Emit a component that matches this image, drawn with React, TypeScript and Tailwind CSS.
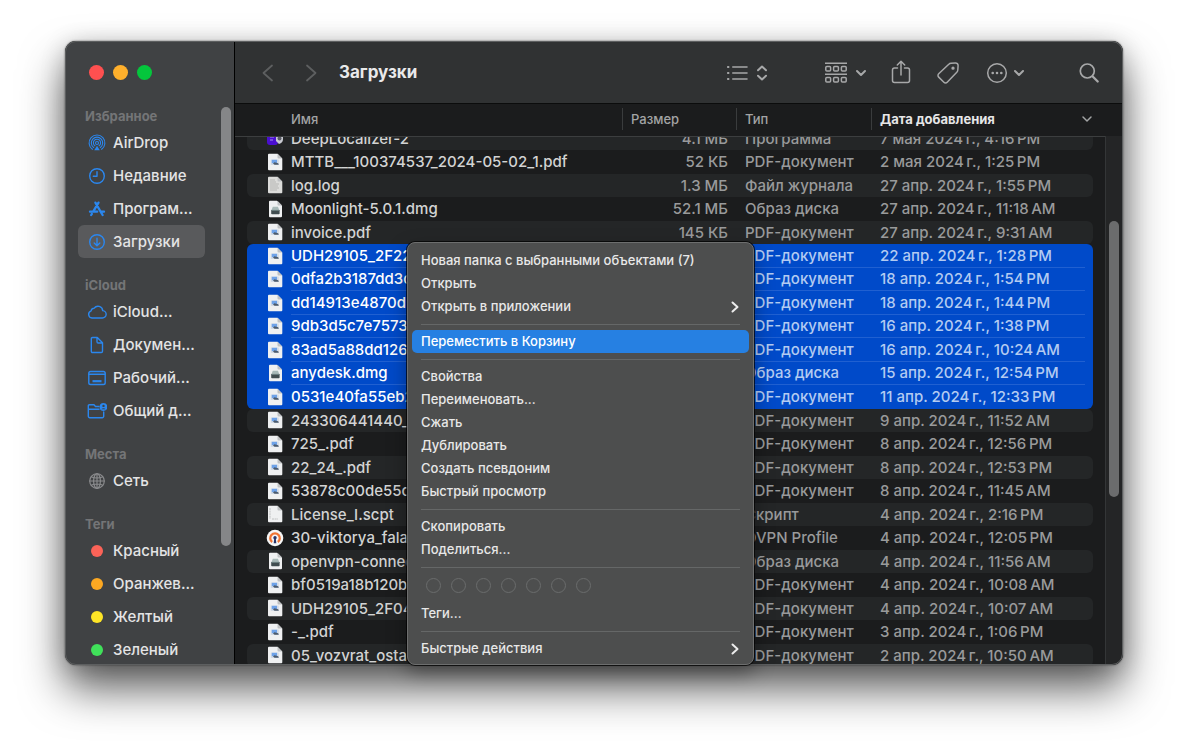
import type { ReactNode } from 'react';

type FileKind = 'app' | 'pdf' | 'log' | 'dmg' | 'script' | 'vpn';

interface FileRow {
  kind: FileKind;
  name: string;
  size?: string;
  type: string;
  date: string;
  selected?: boolean;
}

const files: FileRow[] = [
  { kind: 'app', name: 'DeepLocalizer-2', size: '4.1 МБ', type: 'Программа', date: '7 мая 2024\u202Fг., 4:16\u202FPM' },
  { kind: 'pdf', name: 'MTTB___100374537_2024-05-02_1.pdf', size: '52 КБ', type: 'PDF-документ', date: '2 мая 2024\u202Fг., 1:25\u202FPM' },
  { kind: 'log', name: 'log.log', size: '1.3 МБ', type: 'Файл журнала', date: '27 апр. 2024\u202Fг., 1:55\u202FPM' },
  { kind: 'dmg', name: 'Moonlight-5.0.1.dmg', size: '52.1 МБ', type: 'Образ диска', date: '27 апр. 2024\u202Fг., 11:18\u202FAM' },
  { kind: 'pdf', name: 'invoice.pdf', size: '145 КБ', type: 'PDF-документ', date: '27 апр. 2024\u202Fг., 9:31\u202FAM' },
  { kind: 'pdf', name: 'UDH29105_2F22', type: 'PDF-документ', date: '22 апр. 2024\u202Fг., 1:28\u202FPM', selected: true },
  { kind: 'pdf', name: '0dfa2b3187dd3c', type: 'PDF-документ', date: '18 апр. 2024\u202Fг., 1:54\u202FPM', selected: true },
  { kind: 'pdf', name: 'dd14913e4870d', type: 'PDF-документ', date: '18 апр. 2024\u202Fг., 1:44\u202FPM', selected: true },
  { kind: 'pdf', name: '9db3d5c7e7573', type: 'PDF-документ', date: '16 апр. 2024\u202Fг., 1:38\u202FPM', selected: true },
  { kind: 'pdf', name: '83ad5a88dd126', type: 'PDF-документ', date: '16 апр. 2024\u202Fг., 10:24\u202FAM', selected: true },
  { kind: 'dmg', name: 'anydesk.dmg', type: 'Образ диска', date: '15 апр. 2024\u202Fг., 12:54\u202FPM', selected: true },
  { kind: 'pdf', name: '0531e40fa55eb2', type: 'PDF-документ', date: '11 апр. 2024\u202Fг., 12:33\u202FPM', selected: true },
  { kind: 'pdf', name: '243306441440_', type: 'PDF-документ', date: '9 апр. 2024\u202Fг., 11:52\u202FAM' },
  { kind: 'pdf', name: '725_.pdf', type: 'PDF-документ', date: '8 апр. 2024\u202Fг., 12:56\u202FPM' },
  { kind: 'pdf', name: '22_24_.pdf', type: 'PDF-документ', date: '8 апр. 2024\u202Fг., 12:53\u202FPM' },
  { kind: 'pdf', name: '53878c00de55c', type: 'PDF-документ', date: '8 апр. 2024\u202Fг., 11:45\u202FAM' },
  { kind: 'script', name: 'License_I.scpt', type: 'Скрипт', date: '4 апр. 2024\u202Fг., 2:16\u202FPM' },
  { kind: 'vpn', name: '30-viktorya_fala', type: 'OVPN Profile', date: '4 апр. 2024\u202Fг., 12:05\u202FPM' },
  { kind: 'dmg', name: 'openvpn-connec', type: 'Образ диска', date: '4 апр. 2024\u202Fг., 11:56\u202FAM' },
  { kind: 'pdf', name: 'bf0519a18b120b', type: 'PDF-документ', date: '4 апр. 2024\u202Fг., 10:08\u202FAM' },
  { kind: 'pdf', name: 'UDH29105_2F04', type: 'PDF-документ', date: '4 апр. 2024\u202Fг., 10:07\u202FAM' },
  { kind: 'pdf', name: '-_.pdf', type: 'PDF-документ', date: '3 апр. 2024\u202Fг., 1:06\u202FPM' },
  { kind: 'pdf', name: '05_vozvrat_osta', type: 'PDF-документ', date: '2 апр. 2024\u202Fг., 10:50\u202FAM' },
];

function FileIcon({ kind }: { kind: FileKind }) {
  if (kind === 'app') {
    return (
      <svg viewBox="0 0 16 18" className="h-[18px] w-4 shrink-0" aria-hidden="true">
        <rect x="0" y="2" width="11" height="14" rx="3" fill="#4a0fd0" />
        <path d="M9 2h4.5A2.5 2.5 0 0 1 16 4.500V10a5 5 0 0 1-4 5L9 12z" fill="#c9cbd2" />
        <circle cx="12.500" cy="9.500" r="2" fill="#5b5d66" />
        <path d="M3 8h4M3 11h3" stroke="#a58bf0" strokeWidth="1.200" />
      </svg>
    );
  }
  if (kind === 'vpn') {
    return (
      <svg viewBox="0 0 16 18" className="h-[18px] w-4 shrink-0 overflow-visible" aria-hidden="true">
        <circle cx="8" cy="9" r="8.300" fill="#f5f5f5" />
        <path d="M5.200 13A4.800 4.800 0 1 1 10.800 13" fill="none" stroke="#ef7434" strokeWidth="2.300" />
        <circle cx="8" cy="8.800" r="1.700" fill="#27356b" />
        <path d="M7.200 9.500h1.600l.5 4.800H6.700z" fill="#27356b" />
      </svg>
    );
  }
  return (
    <svg viewBox="0 0 16 18" className="h-[18px] w-4 shrink-0" aria-hidden="true">
      <path
        d={kind === 'dmg' ? 'M3 .8h7l5 5v10.400a1 1 0 0 1-1 1H3a1 1 0 0 1-1-1V1.800a1 1 0 0 1 1-1z' : 'M2 .8h8.500L15.300 5.600V16.200a1 1 0 0 1-1 1H2a1 1 0 0 1-1-1V1.800a1 1 0 0 1 1-1z'}
        fill={kind === 'log' ? '#dcdcda' : '#eff0f1'}
      />
      <path d="M10.500 .8L15.200 5.600h-3.700a1 1 0 0 1-1-1z" fill="#bfc1c3" />
      {kind === 'pdf' && (
        <>
          <rect x="3.800" y="6.400" width="8" height="5.600" rx=".6" fill="#d3dbe6" />
          <rect x="4.800" y="6.800" width="5.200" height="3.400" fill="#6ea2e8" />
          <path d="M6 10.600l1.500-1.300 3.700.9.600 1.600H7.500z" fill="#4b5a6c" />
        </>
      )}
      {kind === 'dmg' && (
        <>
          <path d="M5.800 6.800h5.200l1.400 3.700H4.400z" fill="#a9bab9" />
          <path d="M4.200 10h8.400v3.400a.8.800 0 0 1-.8.800H5a.8.800 0 0 1-.8-.8z" fill="#414d50" />
          <path d="M4.400 10.400h8" stroke="#75898a" strokeWidth=".9" />
        </>
      )}
      {kind === 'log' && <path d="M3 4h5M3 6h6M3 8h9M3 10h8M3 12h9M3 14h7" stroke="#a6a7a5" strokeWidth=".7" />}
      {kind === 'script' && <path d="M3 3v11M5 14h6" stroke="#b4b5b6" strokeWidth=".8" strokeDasharray="2 .6" />}
    </svg>
  );
}

function SideIcon({ children, muted }: { children: ReactNode; muted?: boolean }) {
  return (
    <svg
      viewBox="0 0 20 18"
      className={`h-[18px] w-5 shrink-0 ${muted ? 'text-[#8b8c8e]' : 'text-[#2b87ee]'}`}
      fill="none"
      stroke="currentColor"
      strokeWidth="1.400"
      strokeLinecap="round"
      strokeLinejoin="round"
      aria-hidden="true"
    >
      {children}
    </svg>
  );
}

const airdropIcon = (
  <SideIcon>
    <g strokeWidth="1.100">
      <path d="M5.400 15.300a7.900 7.900 0 1 1 9.200 0" />
      <path d="M6.700 13.500a5.700 5.700 0 1 1 6.600 0" />
      <path d="M7.900 11.800a3.600 3.600 0 1 1 4.200 0" />
      <circle cx="10" cy="9" r="1.500" />
      <path d="M10 11.800l-2.800 4.500h5.600z" fill="currentColor" stroke="none" />
    </g>
  </SideIcon>
);
const clockIcon = (
  <SideIcon>
    <circle cx="10" cy="9" r="7.300" />
    <path d="M10 4.800V9.200H6.300" />
  </SideIcon>
);
const appsIcon = (
  <SideIcon>
    <path d="M8.400 2.600l5.700 9.900 1.500 2.500M11.500 2.600L6.300 11.400M4.900 13.900l-.7 1.100M3 11.700h7.200M14.400 11.700h2.600" strokeWidth="2.300" />
  </SideIcon>
);
const downloadIcon = (
  <SideIcon>
    <circle cx="10" cy="9" r="7.300" />
    <path d="M10 5.200v7.300M7.200 9.900l2.800 2.800 2.800-2.800" />
  </SideIcon>
);
const cloudIcon = (
  <SideIcon>
    <path d="M5 15a3.700 3.700 0 0 1-.8-7.200 2.800 2.800 0 0 1 3-2.600A4.700 4.700 0 0 1 15.700 7.600 3.700 3.700 0 0 1 15.200 15z" />
  </SideIcon>
);
const docIcon = (
  <SideIcon>
    <path d="M5.500 1.500h4.800l5.200 5.300v8.500a1.200 1.200 0 0 1-1.200 1.200H5.500a1.200 1.200 0 0 1-1.200-1.200V2.700a1.200 1.200 0 0 1 1.200-1.200zM10 1.800v4a1.200 1.200 0 0 0 1.200 1.200h4" />
  </SideIcon>
);
const desktopIcon = (
  <SideIcon>
    <rect x="1.800" y="2.500" width="16.400" height="13" rx="1.800" />
    <path d="M2 5.200h16" />
    <path d="M5.500 12.200h9" strokeWidth="2.200" strokeLinecap="butt" />
  </SideIcon>
);
const sharedIcon = (
  <SideIcon>
    <path d="M12 4.500H8.500L7 2.800H2.300a1 1 0 0 0-1 1v10.400A1.500 1.500 0 0 0 2.800 15.700h12.400a1.500 1.500 0 0 0 1.500-1.500V10M1.300 7.300H12" />
    <circle cx="16.500" cy="5" r="3.900" fill="currentColor" stroke="none" />
    <circle cx="16.500" cy="3.900" r="1.200" fill="#404244" stroke="none" />
    <path d="M14.500 7.300a2.200 1.700 0 0 1 4 0z" fill="#404244" stroke="none" />
  </SideIcon>
);
const globeIcon = (
  <SideIcon muted>
    <g strokeWidth="1.150">
      <circle cx="10" cy="9" r="7.300" />
      <ellipse cx="10" cy="9" rx="3.400" ry="7.300" />
      <path d="M10 1.700v14.600M2.700 9h14.600M4.200 4.700c3.200 1.700 8.400 1.700 11.600 0M4.200 13.300c3.200-1.700 8.400-1.700 11.600 0" />
    </g>
  </SideIcon>
);
const dot = (className: string) => (
  <span className="flex w-5 shrink-0 justify-center">
    <span className={`size-3 rounded-full ${className}`} />
  </span>
);

interface SideEntry {
  icon: ReactNode;
  label: string;
  active?: boolean;
}

const sections: { title: string; items: SideEntry[] }[] = [
  {
    title: 'Избранное',
    items: [
      { icon: airdropIcon, label: 'AirDrop' },
      { icon: clockIcon, label: 'Недавние' },
      { icon: appsIcon, label: 'Програм...' },
      { icon: downloadIcon, label: 'Загрузки', active: true },
    ],
  },
  {
    title: 'iCloud',
    items: [
      { icon: cloudIcon, label: 'iCloud...' },
      { icon: docIcon, label: 'Докумен...' },
      { icon: desktopIcon, label: 'Рабочий...' },
      { icon: sharedIcon, label: 'Общий д...' },
    ],
  },
  { title: 'Места', items: [{ icon: globeIcon, label: 'Сеть' }] },
  {
    title: 'Теги',
    items: [
      { icon: dot('bg-[#fb6358]'), label: 'Красный' },
      { icon: dot('bg-[#fda822]'), label: 'Оранжев...' },
      { icon: dot('bg-[#fee526]'), label: 'Желтый' },
      { icon: dot('bg-[#40e15a]'), label: 'Зеленый' },
    ],
  },
];

function Sidebar() {
  return (
    <aside className="relative flex w-[170px] shrink-0 flex-col overflow-hidden border-r border-black bg-[#404244]">
      <div className="flex h-12 shrink-0 gap-[9px] pt-6 pl-6">
        <button type="button" aria-label="Закрыть" className="size-[15px] rounded-full bg-[#ff5050]" />
        <button type="button" aria-label="Свернуть" className="size-[15px] rounded-full bg-[#ffb02c]" />
        <button type="button" aria-label="Развернуть" className="size-[15px] rounded-full bg-[#04c63c]" />
      </div>
      <nav>
        {sections.map((section) => (
          <section key={section.title}>
            <h2 className="h-[37px] pt-[18px] pl-5 text-[13px] leading-[18px] font-bold text-[#747577]">{section.title}</h2>
            <ul>
              {section.items.map((item) => (
                <li key={item.label} className="pr-[29px] pl-[13px]">
                  <a
                    href="#"
                    className={`flex h-[33px] items-center gap-[6px] rounded-md pl-[9px] text-[15px] font-medium whitespace-nowrap text-[#e4e4e5] ${item.active ? 'bg-[#595a5c]' : ''}`}
                  >
                    {item.icon}
                    <span className="pt-[2px]">{item.label}</span>
                  </a>
                </li>
              ))}
            </ul>
          </section>
        ))}
      </nav>
      <div className="absolute top-[66px] right-[3px] h-[439px] w-[10px] rounded-full bg-[#858688]" />
    </aside>
  );
}

function Toolbar() {
  const icon = 'shrink-0 fill-none stroke-current';
  return (
    <header className="flex h-[63px] shrink-0 items-center border-b border-[#0b0c0c] bg-[#303233] pt-[2px] pr-[23px] pl-[26px] text-[#a7a8a9]">
      <button type="button" aria-label="Назад" className="text-[#5d5f60]">
        <svg viewBox="0 0 14 20" className={`h-5 w-[14px] ${icon}`} strokeWidth="1.800" strokeLinecap="round" strokeLinejoin="round">
          <path d="M11 2.500L2.500 10 11 17.500" />
        </svg>
      </button>
      <button type="button" aria-label="Вперед" className="ml-[29px] text-[#5d5f60]">
        <svg viewBox="0 0 14 20" className={`h-5 w-[14px] ${icon}`} strokeWidth="1.800" strokeLinecap="round" strokeLinejoin="round">
          <path d="M3 2.500L11.500 10 3 17.500" />
        </svg>
      </button>
      <h1 className="ml-[21px] text-[17px] font-bold text-[#e9e9ea]">Загрузки</h1>
      <div className="ml-auto flex items-center">
        <button type="button" aria-label="Вид" className="flex items-center gap-2">
          <svg viewBox="0 0 22 18" className={`h-[18px] w-[22px] ${icon}`} strokeWidth="1.600" strokeLinecap="round">
            <path d="M6.800 3H21M6.800 9H21M6.800 15H21" />
            <path d="M2 3h.4M2 9h.4M2 15h.4" strokeWidth="2.200" />
          </svg>
          <svg viewBox="0 0 12 18" className={`h-[18px] w-3 ${icon}`} strokeWidth="2" strokeLinecap="round" strokeLinejoin="round">
            <path d="M2 6.200L6 2.500l4 3.700M2 11.800l4 3.700 4-3.700" />
          </svg>
        </button>
        <button type="button" aria-label="Группировка" className="ml-[56px] flex items-center gap-[7px]">
          <svg viewBox="0 0 24 22" className={`h-[22px] w-6 ${icon}`} strokeWidth="1.500">
            <path d="M1 1.200h22M1 12.200h22" />
            <rect x="1.800" y="4.500" width="4.800" height="4.500" rx="1" />
            <rect x="9.600" y="4.500" width="4.800" height="4.500" rx="1" />
            <rect x="17.400" y="4.500" width="4.800" height="4.500" rx="1" />
            <rect x="1.800" y="15.500" width="4.800" height="4.500" rx="1" />
            <rect x="9.600" y="15.500" width="4.800" height="4.500" rx="1" />
            <rect x="17.400" y="15.500" width="4.800" height="4.500" rx="1" />
          </svg>
          <svg viewBox="0 0 12 8" className={`h-2 w-3 ${icon}`} strokeWidth="2" strokeLinecap="round" strokeLinejoin="round">
            <path d="M2 2l4 4 4-4" />
          </svg>
        </button>
        <button type="button" aria-label="Поделиться" className="ml-[23px]">
          <svg viewBox="0 0 22 26" className={`h-[26px] w-[22px] ${icon}`} strokeWidth="1.500" strokeLinecap="round" strokeLinejoin="round">
            <path d="M7.500 8H4.500A2 2 0 0 0 2.500 10v10.500a2 2 0 0 0 2 2h13a2 2 0 0 0 2-2V10a2 2 0 0 0-2-2H14.500" />
            <path d="M11 15V1.700M7.300 5L11 1.300 14.700 5" />
          </svg>
        </button>
        <button type="button" aria-label="Теги" className="ml-[24px]">
          <svg viewBox="0 0 24 24" className={`size-6 ${icon}`} strokeWidth="1.500" strokeLinecap="round" strokeLinejoin="round">
            <path d="M15 2.200L19.300 1.900a2.600 2.600 0 0 1 2.800 2.800L21.800 9a3.400 3.400 0 0 1-1 2.200L11.200 21.300a2.300 2.300 0 0 1-3.300 0L2.700 16.100a2.300 2.300 0 0 1 0-3.300L12.800 3.200a3.400 3.400 0 0 1 2.200-1z" />
            <circle cx="17" cy="7.200" r=".9" fill="currentColor" />
          </svg>
        </button>
        <button type="button" aria-label="Действия" className="ml-[26px] flex items-center gap-[5px]">
          <svg viewBox="0 0 22 22" className={`size-[22px] ${icon}`} strokeWidth="1.500">
            <circle cx="11" cy="11" r="9.300" />
            <path d="M6.700 11h.02M11 11h.02M15.300 11h.02" strokeWidth="2.600" strokeLinecap="round" />
          </svg>
          <svg viewBox="0 0 12 8" className={`h-2 w-3 ${icon}`} strokeWidth="2" strokeLinecap="round" strokeLinejoin="round">
            <path d="M2 2l4 4 4-4" />
          </svg>
        </button>
        <button type="button" aria-label="Поиск" className="ml-[53px]">
          <svg viewBox="0 0 22 22" className={`size-[22px] ${icon}`} strokeLinecap="round">
            <circle cx="9.300" cy="9" r="7" strokeWidth="1.700" />
            <path d="M14.700 14.500l5 5" strokeWidth="2.300" />
          </svg>
        </button>
      </div>
    </header>
  );
}

function rowTone(file: FileRow, index: number) {
  if (file.selected) return 'bg-[#004ac9]';
  return index % 2 === 0 ? 'bg-[#242627]' : '';
}

function FileTable() {
  return (
    <table className="w-full table-fixed border-collapse text-left text-[15px] font-medium whitespace-nowrap">
      <colgroup>
        <col className="w-3" />
        <col />
        <col className="w-[114px]" />
        <col className="w-[135px]" />
        <col className="w-[222px]" />
        <col className="w-[30px]" />
      </colgroup>
      <thead>
        <tr className="h-8 border-b border-[#3c3e3f] text-[13px] leading-[22px] text-[#a3a4a5]">
          <td />
          <th scope="col" className="p-0 pb-[2px] pl-[44px] font-medium">Имя</th>
          <th scope="col" className="p-0 pb-[2px] font-medium">
            <div className="border-l border-[#3a3c3d] pl-2">Размер</div>
          </th>
          <th scope="col" className="p-0 pb-[2px] font-medium">
            <div className="border-l border-[#3a3c3d] pl-2">Тип</div>
          </th>
          <th scope="col" className="p-0 pb-[2px] font-bold text-[#e6e6e7]" aria-sort="descending">
            <div className="flex items-center justify-between border-l border-[#3a3c3d] pl-2">
              Дата добавления
              <svg viewBox="0 0 12 8" className="h-2 w-3 fill-none stroke-[#a3a4a5]" strokeWidth="1.500" strokeLinecap="round" strokeLinejoin="round" aria-hidden="true">
                <path d="M2 2l4 4 4-4" />
              </svg>
            </div>
          </th>
          <td />
        </tr>
      </thead>
      <tbody>
        {files.map((file, i) => {
          const tone = rowTone(file, i);
          const first = i === 0;
          const startsBlock = !file.selected || !files[i - 1]?.selected;
          const endsBlock = !file.selected || !files[i + 1]?.selected;
          const left = `${startsBlock && !first ? 'rounded-tl-md' : ''} ${endsBlock ? 'rounded-bl-md' : ''}`;
          const right = `${startsBlock && !first ? 'rounded-tr-md' : ''} ${endsBlock ? 'rounded-br-md' : ''}`;
          const cell = first ? 'h-[13px]' : i % 2 === 0 ? 'h-[23px]' : 'h-6';
          const line = file.selected && !endsBlock ? 'border-b border-[#2060d1]' : '';
          const inner = `flex flex-col justify-end overflow-hidden ${cell}`;
          const text = `flex shrink-0 items-center pt-[2px] ${first ? 'h-[23px]' : 'h-full'} ${line}`;
          const detail = file.selected ? 'text-[#b3cbf1]' : 'text-[#999a9b]';
          return (
            <tr key={i}>
              <td className="p-0" />
              <td className={`p-0 ${tone} ${left}`}>
                <div className={inner}>
                  <div className={`flex shrink-0 items-center gap-2 pl-5 ${first ? 'h-[23px]' : 'h-full'}`}>
                    <FileIcon kind={file.kind} />
                    <span className={`flex flex-1 items-center self-stretch pt-[2px] ${line} ${file.selected ? 'text-white' : 'text-[#d2d3d3]'}`}>
                      {file.name}
                    </span>
                  </div>
                </div>
              </td>
              <td className={`p-0 ${tone}`}>
                <div className={inner}>
                  <div className={`${text} ${detail} justify-end pr-2`}>{file.size}</div>
                </div>
              </td>
              <td className={`p-0 ${tone}`}>
                <div className={inner}>
                  <div className={`${text} ${detail} pl-[9px]`}>{file.type}</div>
                </div>
              </td>
              <td className={`p-0 ${tone} ${right}`}>
                <div className={inner}>
                  <div className={`${text} ${detail} mr-2 pl-[9px]`}>{file.date}</div>
                </div>
              </td>
              <td className="p-0" />
            </tr>
          );
        })}
      </tbody>
    </table>
  );
}

function MenuItem({ label, submenu, active }: { label: string; submenu?: boolean; active?: boolean }) {
  return (
    <button
      type="button"
      role="menuitem"
      className={`flex h-[23px] w-full items-center justify-between rounded-[5px] px-[9px] text-left text-[13px] font-medium ${active ? 'bg-[#2680e2] text-white' : 'text-[#e8e8e8]'}`}
    >
      {label}
      {submenu && (
        <svg viewBox="0 0 10 14" className="h-[14px] w-[10px] fill-none stroke-[#ececec]" strokeWidth="2" strokeLinecap="round" strokeLinejoin="round" aria-hidden="true">
          <path d="M2.500 2.500L7.500 7l-5 4.500" />
        </svg>
      )}
    </button>
  );
}

function Separator() {
  return (
    <div role="separator" className="flex h-3 items-center px-[9px]">
      <div className="h-px flex-1 bg-[#656767]" />
    </div>
  );
}

const tagNames = ['Красный', 'Оранжевый', 'Желтый', 'Зеленый', 'Синий', 'Лиловый', 'Серый'];

function ContextMenu() {
  return (
    <div
      role="menu"
      className="absolute top-[201px] left-[342px] w-[347px] rounded-lg border border-[#6d6e6e] bg-[#4d4e4e] px-1 pt-[6px] pb-1 shadow-[0_0_0_1px_rgba(0,0,0,0.7),0_8px_20px_rgba(0,0,0,0.35)]"
    >
      <MenuItem label="Новая папка с выбранными объектами (7)" />
      <MenuItem label="Открыть" />
      <MenuItem label="Открыть в приложении" submenu />
      <Separator />
      <MenuItem label="Переместить в Корзину" active />
      <Separator />
      <MenuItem label="Свойства" />
      <MenuItem label="Переименовать..." />
      <MenuItem label="Сжать" />
      <MenuItem label="Дублировать" />
      <MenuItem label="Создать псевдоним" />
      <MenuItem label="Быстрый просмотр" />
      <Separator />
      <MenuItem label="Скопировать" />
      <MenuItem label="Поделиться..." />
      <Separator />
      <div className="mb-1 flex h-[25px] items-center gap-[10px] pl-[14px]">
        {tagNames.map((name) => (
          <button key={name} type="button" aria-label={name} className="size-[15px] rounded-full border border-[#6a6c6c]" />
        ))}
      </div>
      <MenuItem label="Теги..." />
      <Separator />
      <MenuItem label="Быстрые действия" submenu />
    </div>
  );
}

export default function App() {
  return (
    <div className="flex h-screen flex-col overflow-hidden bg-white pt-[41px] pr-[77px] pb-[84px] pl-[65px] font-['Inter','Noto_Sans',sans-serif]">
      <div className="relative flex min-h-0 flex-1 rounded-[11px] shadow-[0_0_2px_rgba(0,0,0,0.6),0_24px_44px_rgba(0,0,0,0.62),0_4px_24px_rgba(0,0,0,0.2)]">
        <div className="flex min-w-0 flex-1 overflow-hidden rounded-[11px] bg-[#1b1c1d]">
          <Sidebar />
          <main className="flex min-w-0 flex-1 flex-col">
            <Toolbar />
            <div className="relative min-h-0 flex-1 overflow-hidden">
              <FileTable />
              <div className="absolute top-8 right-0 bottom-0 w-[18px] border-l border-[#343637] bg-[#242526]">
                <div className="mt-[85px] ml-[3px] h-[276px] w-[10px] rounded-full bg-[#6b6c6d]" />
              </div>
            </div>
          </main>
        </div>
        <div className="pointer-events-none absolute inset-0 rounded-[11px] border border-[#5d5f60]" />
        <ContextMenu />
      </div>
    </div>
  );
}
